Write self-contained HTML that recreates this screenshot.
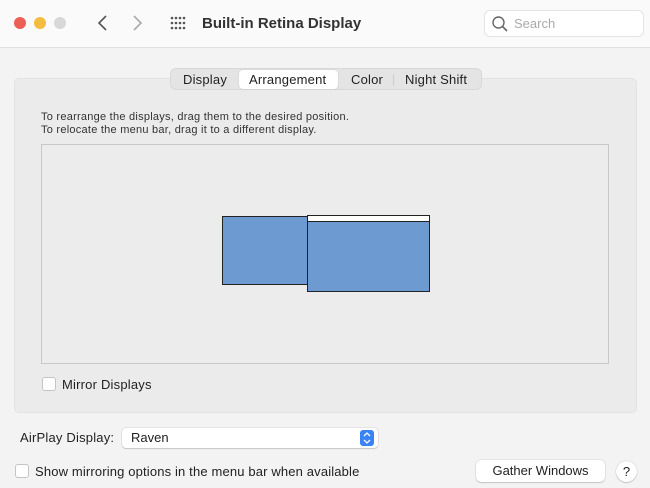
<!DOCTYPE html><html><head><style>
*{box-sizing:border-box;margin:0;padding:0}
body{width:650px;height:488px;background:#f3f3f3;font-family:"Liberation Sans",sans-serif;color:#222;position:relative;overflow:hidden}
.a{position:absolute}
.tb{left:0;top:0;width:650px;height:48px;background:#fafafa;border-bottom:1px solid #e0e0e0}
.dot{width:12px;height:12px;border-radius:50%;top:17px}
.panel{left:14px;top:78px;width:623px;height:335px;background:#ebebeb;border-radius:5px;border:1px solid #e2e2e2}
.tabs{left:170px;top:68px;width:312px;height:22px;background:#e4e4e4;border:1px solid #d8d8d8;border-radius:6px;font-size:13px;letter-spacing:0.2px}
.tabs span{position:absolute;top:3px}
.cb{width:14px;height:14px;background:#fff;border:1px solid #c4c4c4;border-radius:3px}
</style></head><body>
<div class="a tb"></div>
<div class="a dot" style="left:14px;background:#ec5f57"></div>
<div class="a dot" style="left:34px;background:#f4bd3f"></div>
<div class="a dot" style="left:54px;background:#d8d8d8"></div>
<svg class="a" style="left:94px;top:14px" width="60" height="18"><path d="M12 2 L5 9 L12 16" stroke="#555" stroke-width="1.6" fill="none"/><path d="M40 2 L47 9 L40 16" stroke="#aaa" stroke-width="1.6" fill="none"/></svg>
<svg class="a" style="left:170px;top:16px" width="17" height="14" fill="#555"><circle cx="2" cy="2" r="1.3"/><circle cx="6" cy="2" r="1.3"/><circle cx="10" cy="2" r="1.3"/><circle cx="14" cy="2" r="1.3"/><circle cx="2" cy="7" r="1.3"/><circle cx="6" cy="7" r="1.3"/><circle cx="10" cy="7" r="1.3"/><circle cx="14" cy="7" r="1.3"/><circle cx="2" cy="12" r="1.3"/><circle cx="6" cy="12" r="1.3"/><circle cx="10" cy="12" r="1.3"/><circle cx="14" cy="12" r="1.3"/></svg>
<div class="a" style="left:202px;top:15px;font-size:15px;font-weight:bold;color:#333">Built-in Retina Display</div>
<div class="a" style="left:484px;top:10px;width:160px;height:27px;background:#fff;border:1px solid #e4e4e4;border-radius:6px"></div>
<svg class="a" style="left:491px;top:15px" width="18" height="18"><circle cx="7.5" cy="7.5" r="5.5" stroke="#666" stroke-width="1.4" fill="none"/><path d="M11.5 11.5 L16 16" stroke="#666" stroke-width="1.6"/></svg>
<div class="a" style="left:514px;top:16px;font-size:13px;color:#aaa">Search</div>
<div class="a panel"></div>
<div class="a tabs">
<span style="left:12px">Display</span>
<div class="a" style="left:68px;top:1px;width:99px;height:19px;background:#fff;border-radius:4px;box-shadow:0 0 1px #aaa"></div>
<span style="left:78px">Arrangement</span>
<span style="left:180px">Color</span>
<div class="a" style="left:222px;top:5px;width:1px;height:12px;background:#ccc"></div>
<span style="left:234px">Night Shift</span>
</div>
<div class="a" style="left:41px;top:111px;font-size:11px;line-height:13px;color:#333;letter-spacing:0.25px">To rearrange the displays, drag them to the desired position.<br>To relocate the menu bar, drag it to a different display.</div>
<div class="a" style="left:41px;top:144px;width:568px;height:220px;background:#ececec;border:1px solid #c8c8c8"></div>
<div class="a" style="left:222px;top:216px;width:86px;height:69px;background:#6d9bd1;border:1px solid #222"></div>
<div class="a" style="left:307px;top:215px;width:123px;height:77px;background:#6d9bd1;border:1px solid #222"></div>
<div class="a" style="left:308px;top:216px;width:121px;height:6px;background:#fff;border-bottom:1px solid #222"></div>
<div class="a cb" style="left:42px;top:377px"></div>
<div class="a" style="left:62px;top:377px;font-size:13px;letter-spacing:0.2px">Mirror Displays</div>
<div class="a" style="left:20px;top:430px;font-size:13px;letter-spacing:0.2px">AirPlay Display:</div>
<div class="a" style="left:122px;top:428px;width:256px;height:20px;background:#fff;border-radius:4px;box-shadow:0 0 1px #999,0 1px 1px #ccc"></div>
<div class="a" style="left:131px;top:430px;font-size:13px">Raven</div>
<div class="a" style="left:360px;top:430px;width:14px;height:16px;background:#3b82f6;border-radius:3px"></div>
<svg class="a" style="left:360px;top:430px" width="14" height="16"><path d="M4 6 L7 3 L10 6 M4 10 L7 13 L10 10" stroke="#fff" stroke-width="1.3" fill="none"/></svg>
<div class="a cb" style="left:15px;top:464px"></div>
<div class="a" style="left:35px;top:464px;font-size:13px;letter-spacing:0.15px">Show mirroring options in the menu bar when available</div>
<div class="a" style="left:476px;top:460px;width:129px;height:22px;background:#fff;border-radius:5px;box-shadow:0 0 1px #999,0 1px 1px #ccc;font-size:13px;text-align:center;line-height:22px">Gather Windows</div>
<div class="a" style="left:616px;top:461px;width:21px;height:21px;background:#fff;border-radius:50%;box-shadow:0 0 1px #999,0 1px 1px #ccc;font-size:13px;text-align:center;line-height:21px">?</div>
</body></html>
